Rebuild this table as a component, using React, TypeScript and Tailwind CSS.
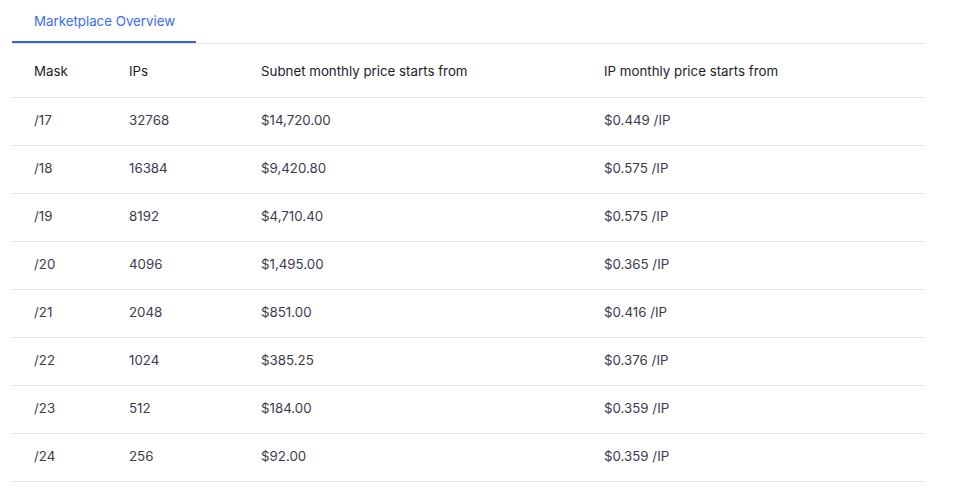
const rows = [
  { mask: '/17', ips: '32768', subnet: '$14,720.00', ip: '$0.449' },
  { mask: '/18', ips: '16384', subnet: '$9,420.80', ip: '$0.575' },
  { mask: '/19', ips: '8192', subnet: '$4,710.40', ip: '$0.575' },
  { mask: '/20', ips: '4096', subnet: '$1,495.00', ip: '$0.365' },
  { mask: '/21', ips: '2048', subnet: '$851.00', ip: '$0.416' },
  { mask: '/22', ips: '1024', subnet: '$385.25', ip: '$0.376' },
  { mask: '/23', ips: '512', subnet: '$184.00', ip: '$0.359' },
  { mask: '/24', ips: '256', subnet: '$92.00', ip: '$0.359' },
];

export default function App() {
  return (
    <div className="min-h-screen bg-white font-['Inter',sans-serif] text-[13.3px]">
      <div className="ml-3 w-[913px]">
        <div className="flex h-[44px] border-b border-[#e4e4e7]">
          <button className="h-[43px] w-[184px] border-b-2 border-[#2f62f0] pt-[2px] pl-[22px] text-left text-[#3a6cf4]">
            Marketplace Overview
          </button>
        </div>
        <table className="w-full border-collapse text-left">
          <thead>
            <tr className="h-[53px] border-b border-[#e4e4e7] text-[#1c1c2e]">
              <th className="w-[117px] pt-[3px] pl-[22px] font-normal">Mask</th>
              <th className="w-[132px] pt-[3px] font-normal">IPs</th>
              <th className="w-[343px] pt-[3px] font-normal">Subnet monthly price starts from</th>
              <th className="pt-[3px] font-normal">IP monthly price starts from</th>
            </tr>
          </thead>
          <tbody className="text-[#3b3b4f]">
            {rows.map((r) => (
              <tr key={r.mask} className="h-[48px] border-b border-[#e4e4e7]">
                <td className="pl-[22px]">{r.mask}</td>
                <td>{r.ips}</td>
                <td>{r.subnet}</td>
                <td>{r.ip} /IP</td>
              </tr>
            ))}
          </tbody>
        </table>
      </div>
    </div>
  );
}
